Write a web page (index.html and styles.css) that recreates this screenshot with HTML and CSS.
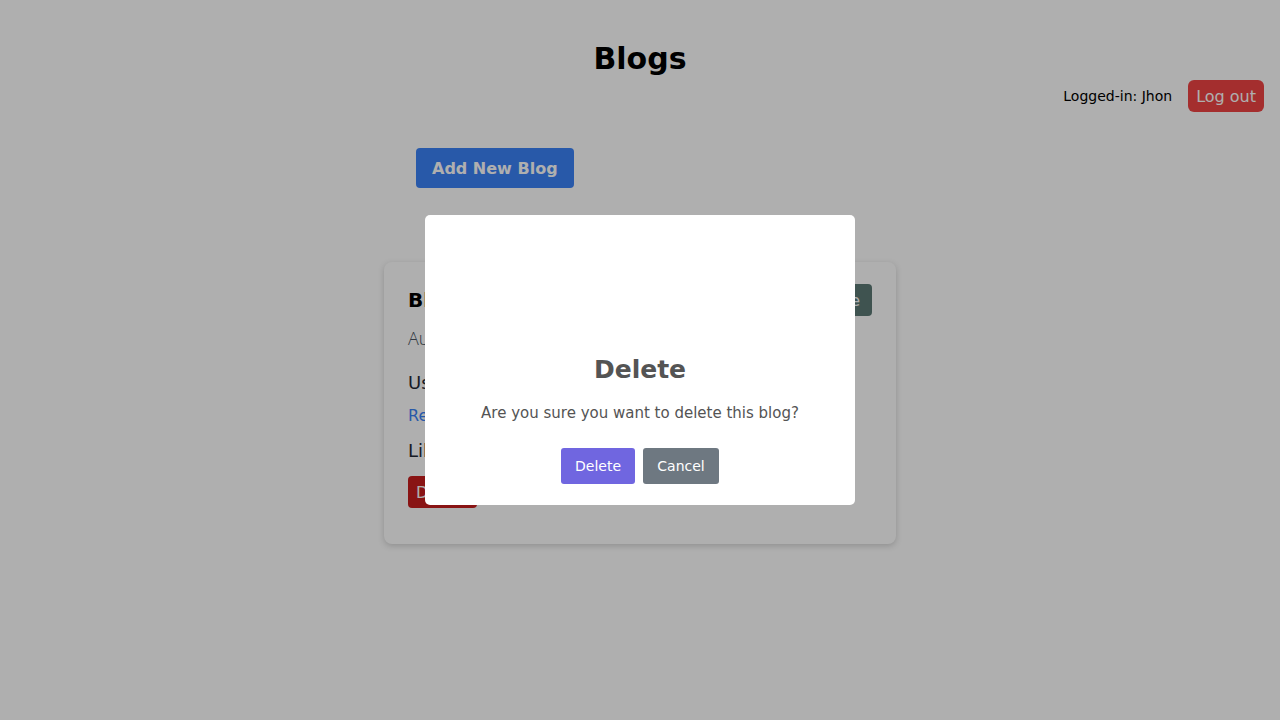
FILE: index.html
```html
<!DOCTYPE html>
<html lang="en">
<head>
<meta charset="utf-8">
<title>Blogs</title>
<link rel="stylesheet" href="styles.css">
</head>
<body>
<div class="page">
  <header class="header">
    <h1 class="title">Blogs</h1>
    <div class="userbar">
      <span class="user">Logged-in: Jhon</span>
      <button class="btn-logout">Log out</button>
    </div>
  </header>
  <main class="content">
    <div class="actions">
      <button class="btn-add">Add New Blog</button>
    </div>
    <section class="card">
      <div class="card-head">
        <h2 class="card-title">Blog about React</h2>
        <button class="btn-update">Update</button>
      </div>
      <p class="card-author">Author: Jhon Doe</p>
      <p class="card-user">User: Jhon</p>
      <a class="card-link" href="#">Read more</a>
      <p class="card-likes">Likes: 0 <button class="btn-like">Like</button></p>
      <div class="card-foot">
        <button class="btn-delete">Delete</button>
      </div>
    </section>
  </main>
</div>

<div class="overlay">
  <div class="modal">
    <div class="modal-icon"></div>
    <h2 class="modal-title">Delete</h2>
    <p class="modal-text">Are you sure you want to delete this blog?</p>
    <div class="modal-actions">
      <button class="mbtn mbtn-confirm">Delete</button>
      <button class="mbtn mbtn-cancel">Cancel</button>
    </div>
  </div>
</div>
</body>
</html>
```

FILE: styles.css
```css
* { box-sizing: border-box; }
html, body { margin: 0; padding: 0; }
body {
  background: #ffffff;
  font-family: "DejaVu Sans", sans-serif;
  color: #000;
  width: 1280px;
  height: 720px;
  overflow: hidden;
}
button { font-family: "DejaVu Sans", sans-serif; border: none; cursor: pointer; }

.page { display: flex; flex-direction: column; }

.header {
  display: flex;
  flex-direction: column;
  align-items: center;
  padding-top: 41px;
}
.title {
  margin: 0;
  font-size: 30px;
  line-height: 36px;
  font-weight: bold;
}
.userbar {
  align-self: flex-end;
  display: flex;
  align-items: center;
  gap: 16px;
  margin-top: 3px;
  padding-right: 16px;
}
.user { font-size: 14px; }
.btn-logout {
  background: #ef4444;
  color: #ffffff;
  font-size: 16px;
  height: 32px;
  padding: 0 8px;
  border-radius: 6px;
}

.content {
  width: 512px;
  margin: 36px auto 0;
  display: flex;
  flex-direction: column;
}
.actions { padding-left: 32px; }
.btn-add {
  background: #3b82f6;
  color: #ffffff;
  font-size: 16px;
  font-weight: bold;
  height: 40px;
  padding: 0 16px;
  border-radius: 4px;
}

.card {
  margin-top: 74px;
  background: #fff;
  border-radius: 8px;
  box-shadow: 0 2px 6px rgba(0,0,0,0.18);
  padding: 22px 24px 36px;
  display: flex;
  flex-direction: column;
}
.card-head {
  display: flex;
  justify-content: space-between;
  align-items: center;
}
.card-title { margin: 0; font-size: 20px; font-weight: bold; }
.btn-update {
  background: #5c7a75;
  color: #fff;
  font-size: 16px;
  height: 32px;
  padding: 0 12px;
  border-radius: 4px;
}
.card-author {
  margin: 10px 0 0;
  font-family: "Open Sans", sans-serif;
  font-weight: 300;
  font-size: 18px;
  color: #4b5563;
}
.card-user { margin: 22px 0 0; font-size: 18px; color: #1f2937; }
.card-link { margin-top: 13px; font-size: 16px; color: #3b82f6; text-decoration: none; }
.card-likes { margin: 12px 0 0; font-size: 18px; color: #1f2937; display: flex; align-items: center; gap: 10px; }
.btn-like { background: #22c55e; color: #fff; font-size: 14px; height: 26px; padding: 0 10px; border-radius: 4px; }
.card-foot { margin-top: 13px; }
.btn-delete {
  background: #c81e1e;
  color: #fff;
  font-size: 16px;
  height: 32px;
  padding: 0 8px;
  width: 69px;
  text-align: left;
  border-radius: 4px;
}

.overlay {
  position: fixed;
  inset: 0;
  background: rgba(0,0,0,0.314);
  display: flex;
  align-items: center;
  justify-content: center;
}
.modal {
  width: 430px;
  height: 290px;
  background: #fff;
  border-radius: 5px;
  display: flex;
  flex-direction: column;
  align-items: center;
  padding-top: 140px;
}
.modal-icon { display: none; }
.modal-title {
  margin: 0;
  font-size: 25px;
  line-height: 30px;
  font-weight: bold;
  color: #545454;
}
.modal-text {
  margin: 18px 0 0;
  font-size: 15px;
  line-height: 20px;
  color: #545454;
}
.modal-actions {
  margin-top: 25px;
  display: flex;
  gap: 8px;
}
.mbtn {
  height: 36px;
  font-size: 14px;
  color: #fff;
  border-radius: 3px;
  padding: 0 14px;
}
.mbtn-confirm { background: #7066e0; width: 74px; }
.mbtn-cancel { background: #6e7881; width: 76px; }
```
